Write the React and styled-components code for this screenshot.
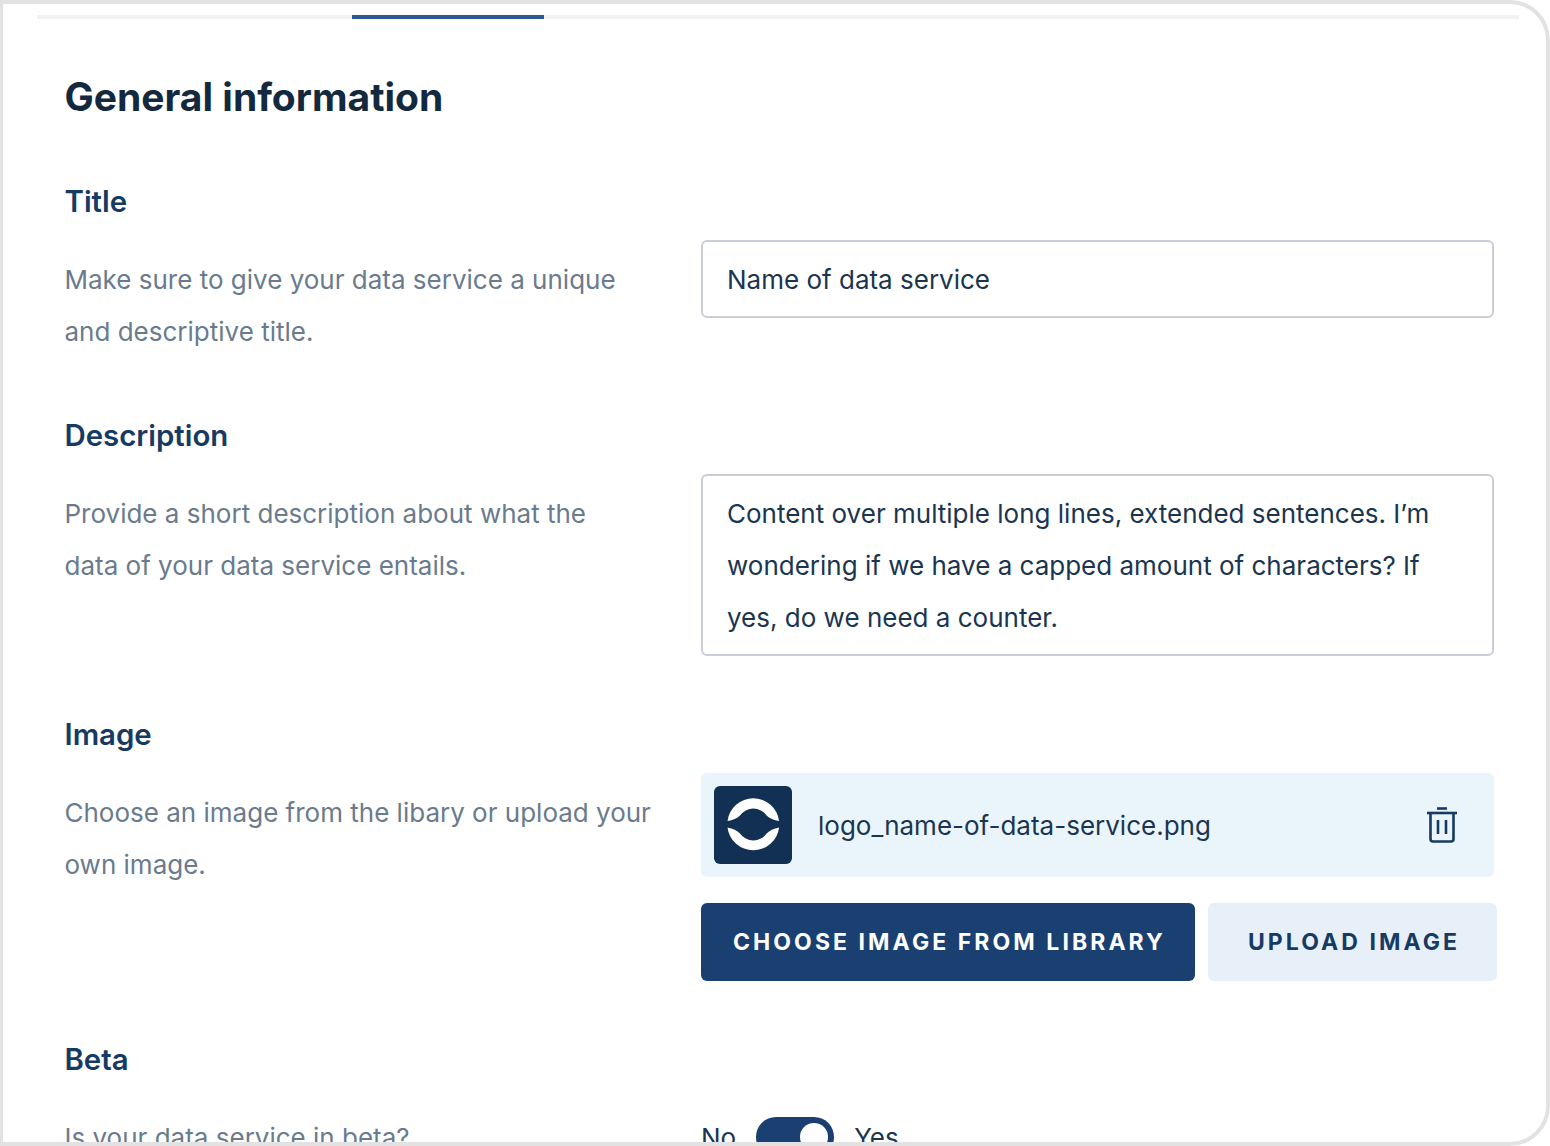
import React from "react";
import styled, { createGlobalStyle } from "styled-components";

const Global = createGlobalStyle`
  html, body { margin: 0; padding: 0; background: #fff; }
  body { font-family: Inter, "Liberation Sans", sans-serif; }
`;

const Frame = styled.div`
  box-sizing: border-box;
  width: 1550px;
  height: 1146px;
  overflow: hidden;
  background: #fff;
  border-style: solid;
  border-color: #e2e2e2;
  border-width: 4px 4px 4px 3px;
  border-radius: 0 40px 40px 0;
`;

const Tabs = styled.div`
  display: flex;
  height: 4px;
  margin: 11px 27px 0 34px;
  background: #f1f2f4;
`;

const ActiveTab = styled.div`
  width: 192px;
  margin-left: 315px;
  background: #2a5a92;
`;

const Content = styled.div`
  padding: 0 0 0 61.5px;
  width: 1429px;
`;

const Heading = styled.h1`
  margin: 50px 0 0;
  height: 56px;
  font-size: 39px;
  line-height: 56px;
  font-weight: 700;
  color: #13293f;
`;

const Section = styled.section`
  margin-top: ${(p) => p.$top}px;
`;

const Label = styled.h2`
  margin: 0 0 18px;
  font-size: 29.4px;
  line-height: 40px;
  font-weight: 600;
  color: #173a63;
`;

const Row = styled.div`
  display: grid;
  grid-template-columns: 636.5px 793px;
  align-items: start;
`;

const Help = styled.p`
  margin: 14px 0 0;
  font-size: 26px;
  line-height: 52px;
  color: #6a7b8d;
`;

const Field = styled.div`
  box-sizing: border-box;
  border: 2px solid #c9ced4;
  border-radius: 6px;
  padding: 12px 24px 10px;
  font-size: 26px;
  line-height: 52px;
  color: #1b3550;
`;

const FileBox = styled.div`
  display: flex;
  align-items: center;
  height: 104px;
  box-sizing: border-box;
  padding: 0 37px 0 13px;
  background: #eaf4fb;
  border-radius: 6px;
`;

const Thumb = styled.svg`
  width: 78px;
  height: 78px;
  flex: none;
`;

const FileName = styled.span`
  flex: 1;
  margin-left: 26px;
  font-size: 26px;
  color: #1b3550;
`;

const Buttons = styled.div`
  display: flex;
  gap: 13px;
  margin-top: 26px;
  width: 796px;
`;

const Button = styled.div`
  box-sizing: border-box;
  width: ${(p) => p.$w}px;
  height: 78px;
  padding-left: 3px;
  display: flex;
  align-items: center;
  justify-content: center;
  border-radius: 6px;
  font-size: 23px;
  font-weight: 700;
  letter-spacing: 3.07px;
  color: ${(p) => (p.$primary ? "#fff" : "#173a63")};
  background: ${(p) => (p.$primary ? "#1a4072" : "#e7f0f9")};
`;

const ToggleRow = styled.div`
  display: flex;
  align-items: center;
  gap: 20px;
  height: 40px;
  margin-top: 19px;
`;

const ToggleText = styled.span`
  font-size: 26px;
  color: #1b3550;
`;

const Switch = styled.div`
  position: relative;
  width: 78px;
  height: 40px;
  border-radius: 20px;
  background: #1a4072;
`;

const Knob = styled.div`
  position: absolute;
  top: 6px;
  right: 6px;
  width: 28px;
  height: 28px;
  border-radius: 50%;
  background: #fff;
`;

const Logo = () => (
  <Thumb viewBox="0 0 78 78">
    <rect width="78" height="78" rx="6" fill="#122f54" />
    <path
      d="M13.5 35 A26 26 0 0 1 65.1 35 Q57 34 52.6 29.6 A16 16 0 0 0 26 29.6 Q21.6 34 13.5 35 Z"
      fill="#fff"
    />
    <path
      d="M13.5 41.5 A26 26 0 0 0 65.1 41.5 Q57 43 52.6 47.4 A16 16 0 0 1 26 47.4 Q21.6 43 13.5 41.5 Z"
      fill="#fff"
    />
  </Thumb>
);

const Trash = () => (
  <svg width="30" height="36" viewBox="0 0 30 36" fill="none" stroke="#173a63" strokeWidth="2.6">
    <path d="M10 1.5 H20" />
    <path d="M0 6 H30" />
    <path d="M3.5 6 V32 Q3.5 34.5 6 34.5 H24 Q26.5 34.5 26.5 32 V6" />
    <path d="M11 13 V27 M19 13 V27" />
  </svg>
);

export default function App() {
  return (
    <Frame>
      <Global />
      <Tabs>
        <ActiveTab />
      </Tabs>
      <Content>
        <Heading>General information</Heading>
        <Section $top={57}>
          <Label>Title</Label>
          <Row>
            <Help>
              Make sure to give your data service a unique
              <br />
              and descriptive title.
            </Help>
            <Field>Name of data service</Field>
          </Row>
        </Section>
        <Section $top={58}>
          <Label>Description</Label>
          <Row>
            <Help>
              Provide a short description about what the
              <br />
              data of your data service entails.
            </Help>
            <Field>
              Content over multiple long lines, extended sentences. I’m
              <br />
              wondering if we have a capped amount of characters? If
              <br />
              yes, do we need a counter.
            </Field>
          </Row>
        </Section>
        <Section $top={59}>
          <Label>Image</Label>
          <Row>
            <Help>
              Choose an image from the libary or upload your
              <br />
              own image.
            </Help>
            <div>
              <FileBox>
                <Logo />
                <FileName>logo_name-of-data-service.png</FileName>
                <Trash />
              </FileBox>
              <Buttons>
                <Button $primary $w={494}>CHOOSE IMAGE FROM LIBRARY</Button>
                <Button $w={289}>UPLOAD IMAGE</Button>
              </Buttons>
            </div>
          </Row>
        </Section>
        <Section $top={59}>
          <Label>Beta</Label>
          <Row>
            <Help>Is your data service in beta?</Help>
            <ToggleRow>
              <ToggleText>No</ToggleText>
              <Switch>
                <Knob />
              </Switch>
              <ToggleText>Yes</ToggleText>
            </ToggleRow>
          </Row>
        </Section>
      </Content>
    </Frame>
  );
}
